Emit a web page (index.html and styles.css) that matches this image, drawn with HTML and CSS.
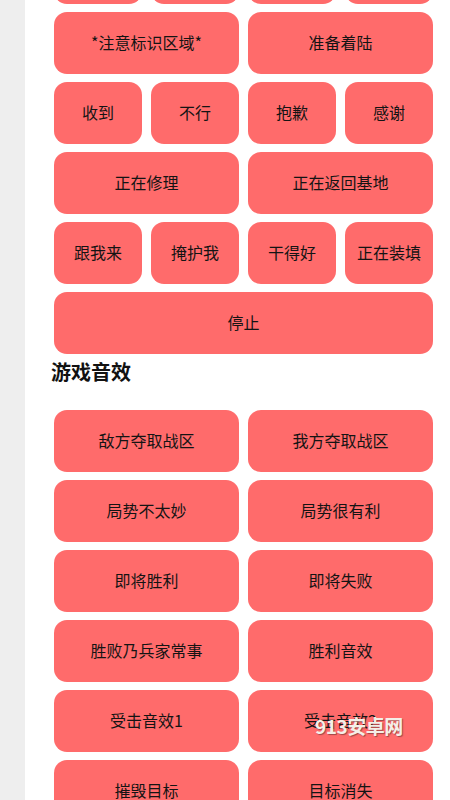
FILE: index.html
```html
<!DOCTYPE html>
<html lang="zh">
<head>
<meta charset="utf-8">
<link rel="stylesheet" href="styles.css">
</head>
<body>
<div class="app">
  <div class="side"></div>
  <div class="main">
    <div class="grid grid-first">
      <button class="btn"></button>
      <button class="btn"></button>
      <button class="btn"></button>
      <button class="btn"></button>
      <button class="btn wide">*注意标识区域*</button>
      <button class="btn wide">准备着陆</button>
      <button class="btn">收到</button>
      <button class="btn">不行</button>
      <button class="btn">抱歉</button>
      <button class="btn">感谢</button>
      <button class="btn wide">正在修理</button>
      <button class="btn wide">正在返回基地</button>
      <button class="btn">跟我来</button>
      <button class="btn">掩护我</button>
      <button class="btn">干得好</button>
      <button class="btn">正在装填</button>
      <button class="btn full">停止</button>
    </div>
    <h2 class="section-title">游戏音效</h2>
    <div class="grid grid-second">
      <button class="btn wide">敌方夺取战区</button>
      <button class="btn wide">我方夺取战区</button>
      <button class="btn wide">局势不太妙</button>
      <button class="btn wide">局势很有利</button>
      <button class="btn wide">即将胜利</button>
      <button class="btn wide">即将失败</button>
      <button class="btn wide">胜败乃兵家常事</button>
      <button class="btn wide">胜利音效</button>
      <button class="btn wide">受击音效1</button>
      <button class="btn wide">受击音效2</button>
      <button class="btn wide">摧毁目标</button>
      <button class="btn wide">目标消失</button>
    </div>
  </div>
</div>
<div class="watermark">913安卓网</div>
</body>
</html>
```
FILE: styles.css
```css
html, body {
  margin: 0;
  padding: 0;
  height: 800px;
  overflow: hidden;
  background: #ffffff;
  font-family: "Noto Sans CJK SC", "Noto Sans", sans-serif;
}

.app {
  display: flex;
  height: 800px;
  overflow: hidden;
}

.side {
  width: 25px;
  flex: none;
  background: #eeeeee;
}

.main {
  flex: 1;
  padding: 0 17px 0 29px;
}

.grid {
  display: grid;
  grid-template-columns: repeat(4, 1fr);
  grid-auto-rows: 62px;
  column-gap: 9px;
  row-gap: 8px;
}

.grid-first {
  margin-top: -58px;
}

.grid-second {
  margin-top: 24px;
}

.btn {
  border: none;
  margin: 0;
  padding: 0 0 3px 0;
  background: #ff6b6b;
  border-radius: 13px;
  color: #141414;
  font-family: "Noto Sans CJK SC", "Noto Sans", sans-serif;
  font-size: 16px;
  font-weight: 400;
  display: flex;
  align-items: center;
  justify-content: center;
}

.wide {
  grid-column: span 2;
}

.full {
  grid-column: span 4;
}

.section-title {
  margin: 4px 0 0 -3px;
  font-size: 20px;
  line-height: 28px;
  font-weight: 700;
  color: #111111;
}

.watermark {
  position: absolute;
  left: 315px;
  top: 712px;
  font-family: "Noto Sans CJK SC", sans-serif;
  font-size: 19px;
  font-weight: 700;
  letter-spacing: -0.5px;
  color: #f4efe8;
  text-shadow: 1px 1px 1px rgba(80, 40, 40, 0.55);
}
```
